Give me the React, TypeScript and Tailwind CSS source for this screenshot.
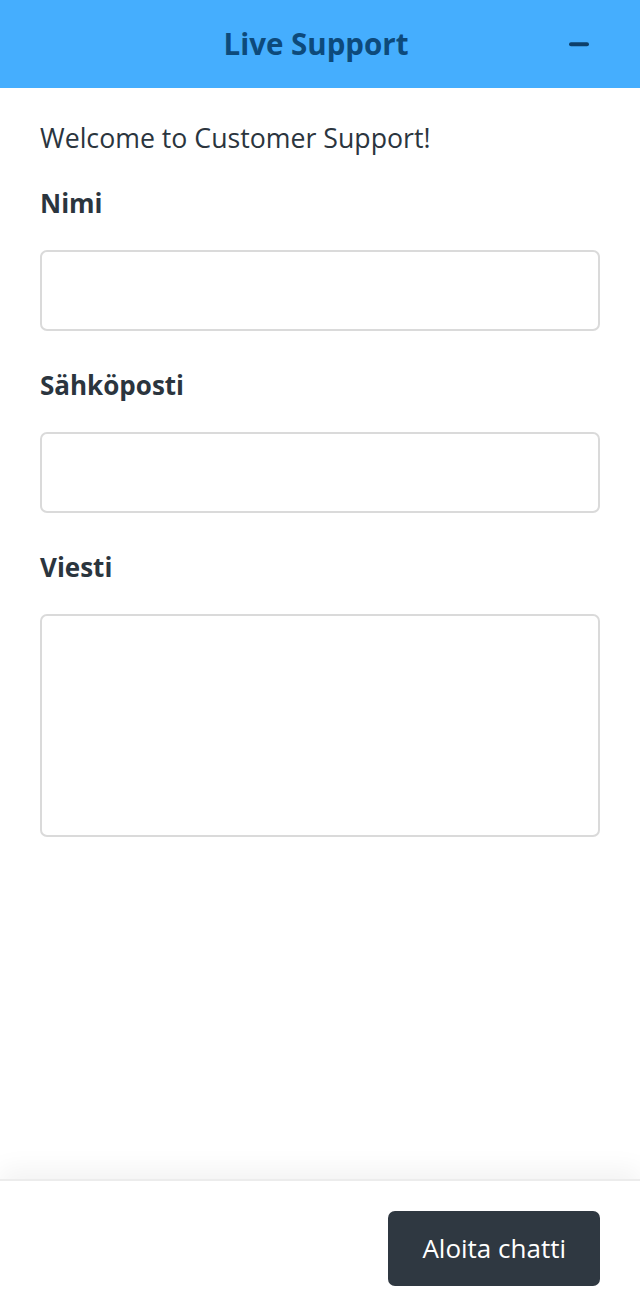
import { useState } from 'react';

const font = { fontFamily: '"Open Sans", "Noto Sans", sans-serif' };

function Field({
  label,
  multiline = false,
  value,
  onChange,
}: {
  label: string;
  multiline?: boolean;
  value: string;
  onChange: (v: string) => void;
}) {
  return (
    <div className="flex flex-col">
      <label className="text-[26px] leading-[36px] font-bold text-[#2b353e] mb-[29px]">
        {label}
      </label>
      {multiline ? (
        <textarea
          value={value}
          onChange={(e) => onChange(e.target.value)}
          className="h-[223px] w-full resize-none rounded-[7px] border-2 border-[#dadada] bg-white px-4 py-3 text-[24px] outline-none"
        />
      ) : (
        <input
          value={value}
          onChange={(e) => onChange(e.target.value)}
          className="h-[81px] w-full rounded-[7px] border-2 border-[#dadada] bg-white px-4 text-[24px] outline-none"
        />
      )}
    </div>
  );
}

export default function App() {
  const [name, setName] = useState('');
  const [email, setEmail] = useState('');
  const [message, setMessage] = useState('');

  return (
    <div className="flex h-[1316px] w-[640px] flex-col bg-white" style={font}>
      <header className="relative flex h-[88px] shrink-0 items-center justify-center bg-[#45aefe] pr-[8px]">
        <h1 className="text-[29.5px] font-bold text-[#0d4a7b]">Live Support</h1>
        <button
          className="absolute right-[47px] top-1/2 -translate-y-1/2 p-1"
          aria-label="Minimize"
        >
          <span className="block h-[3.5px] w-[20px] rounded-full bg-[#0d3f6a]" />
        </button>
      </header>

      <main className="flex flex-1 flex-col px-10 pt-[32px]">
        <p className="mb-[29px] text-[26.7px] leading-[36px] text-[#2b353e]">
          Welcome to Customer Support!
        </p>
        <div className="flex flex-col gap-[36px]">
          <Field label="Nimi" value={name} onChange={setName} />
          <Field label="Sähköposti" value={email} onChange={setEmail} />
          <Field label="Viesti" multiline value={message} onChange={setMessage} />
        </div>
      </main>

      <footer className="flex h-[137px] shrink-0 items-center justify-end border-t-2 border-[#ececec] px-10 shadow-[0_-10px_24px_rgba(0,0,0,0.05)]">
        <button className="h-[75px] rounded-[7px] bg-[#2f3841] px-[34px] text-[26px] text-white">
          Aloita chatti
        </button>
      </footer>
    </div>
  );
}
